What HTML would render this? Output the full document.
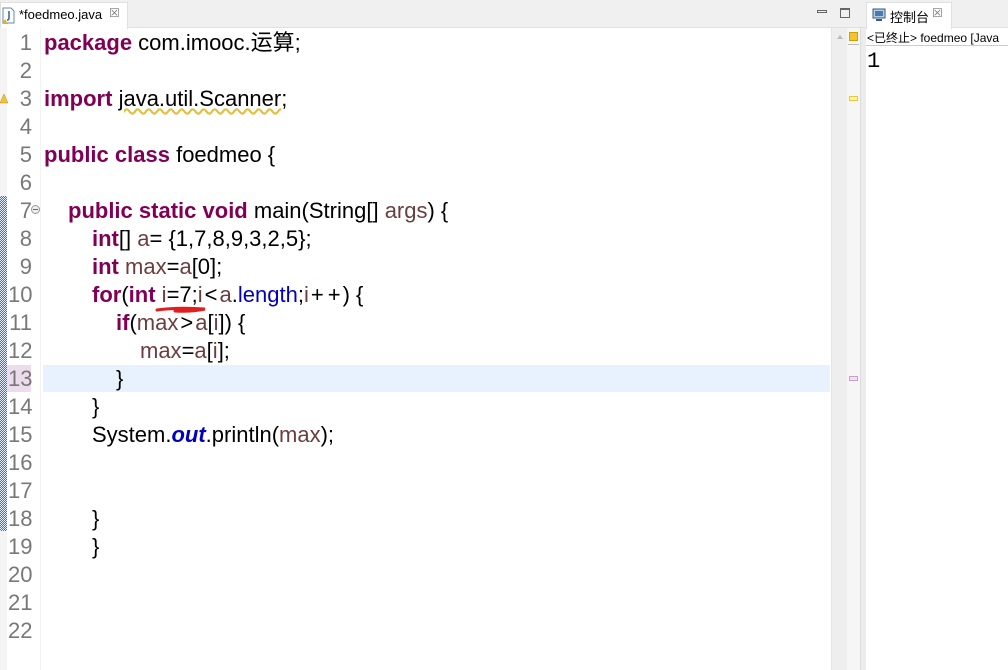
<!DOCTYPE html>
<html><head><meta charset="utf-8"><style>
*{margin:0;padding:0;box-sizing:border-box}
body{width:1008px;height:670px;background:#fff;position:relative;overflow:hidden;font-family:"Liberation Sans","Noto Sans CJK SC",sans-serif}
.abs{position:absolute}
.code{position:absolute;left:44px;font-size:22px;color:#000;white-space:pre;line-height:28px;height:28px}
.ln{position:absolute;left:8px;width:24px;text-align:right;font-size:22px;color:#787878;line-height:28px}
.k{color:#7f0055;font-weight:bold}
.v{color:#6a3e3e}
.f{color:#0000c0}
.t{margin:0 2px}
</style></head><body>
<div class="abs" style="left:0;top:0;width:866px;height:28px;background:#f0f0f0;border-bottom:1px solid #e0e0e0"></div>
<div class="abs" style="left:0;top:2px;width:128px;height:27px;background:#fff;border:1px solid #e0e0e0;border-bottom:none"></div>
<svg class="abs" style="left:2px;top:7px" width="14" height="18"><path d="M1 1h8l3 3v12H1z" fill="#fff" stroke="#6a8ab0"/><path d="M7 4v7q0 2-2 2" stroke="#3060a0" stroke-width="1.5" fill="none"/><path d="M0 17l3-5 3 5z" fill="#e8b020"/></svg>
<div class="abs" style="left:19px;top:7px;font-size:13px;color:#000">*foedmeo.java</div>
<div class="abs" style="left:109px;top:6px;font-size:12px;color:#777">☒</div>
<div class="abs" style="left:817px;top:10px;width:10px;height:3px;border:1px solid #666"></div>
<div class="abs" style="left:840px;top:8px;width:10px;height:10px;border:1px solid #666;border-top-width:2px"></div>
<div class="abs" style="left:0;top:28px;width:7px;height:642px;background:#f4f4f4"></div>
<div class="abs" style="left:0;top:196px;width:7px;height:335px;background:repeating-conic-gradient(#2f73e0 0 25%,#e4eefc 0 50%) 0 0/2px 2px"></div>
<div class="abs" style="left:40px;top:28px;width:1px;height:642px;background:#f2f2f2"></div>
<div class="abs" style="left:7px;top:365px;width:24px;height:27px;background:#ecdcec"></div>
<div class="abs" style="left:43px;top:365px;width:787px;height:27px;background:#e8f2fe"></div>
<div class="abs" style="left:831px;top:28px;width:16px;height:642px;background:#eeeeee;border-left:1px solid #e4e4e4"></div>
<div class="abs" style="left:847px;top:28px;width:13px;height:642px;background:#f6f6f6"></div>
<div class="abs" style="left:860px;top:28px;width:6px;height:642px;background:#ececec;border-left:1px solid #ddd"></div>
<div class="abs" style="left:837px;top:35px;border:3px solid transparent;border-bottom:4px solid #bbb;border-top:none"></div>
<div class="abs" style="left:849px;top:32px;width:9px;height:9px;background:#f4c430;border:1px solid #d0a000"></div>
<div class="abs" style="left:848px;top:44px;width:11px;height:1px;background:#bbb"></div>
<div class="abs" style="left:849px;top:96px;width:9px;height:5px;background:#fff3a0;border:1px solid #e8c840"></div>
<div class="abs" style="left:849px;top:376px;width:9px;height:5px;background:#f0e0f0;border:1px solid #c8a0d0"></div>
<div class="abs" style="left:866px;top:0;width:142px;height:28px;background:#f0f0f0;border-bottom:1px solid #e0e0e0"></div>
<div class="abs" style="left:866px;top:2px;width:86px;height:27px;background:#fff;border:1px solid #e0e0e0;border-bottom:none"></div>
<svg class="abs" style="left:872px;top:8px" width="14" height="14"><rect x="1" y="1" width="12" height="9" fill="#bcd" stroke="#335a8a"/><rect x="3" y="3" width="8" height="5" fill="#4a7ab0"/><rect x="4" y="11" width="6" height="2" fill="#335a8a"/></svg>
<div class="abs" style="left:890px;top:7px;font-size:13px;color:#000">控制台</div>
<div class="abs" style="left:932px;top:6px;font-size:12px;color:#777">☒</div>
<div class="abs" style="left:867px;top:29px;font-size:12px;color:#000;white-space:nowrap">&lt;已终止&gt; foedmeo [Java</div>
<div class="abs" style="left:866px;top:45px;width:142px;height:1px;background:#ccc"></div>
<div class="abs" style="left:867px;top:49px;font-size:22px;color:#000;font-family:'Liberation Mono',monospace">1</div>
<div class="abs" style="left:31px;top:205px;width:9px;height:9px;border:1px solid #999;border-radius:50%;background:#eee"></div>
<div class="abs" style="left:33px;top:209px;width:5px;height:1px;background:#666"></div>
<svg class="abs" style="left:0;top:92px" width="8" height="12"><path d="M0 11l4-9 4 9z" fill="#f0c040" stroke="#c09000" stroke-width=".5"/></svg>
<div class="ln" style="top:29px">1</div><div class="ln" style="top:57px">2</div><div class="ln" style="top:85px">3</div><div class="ln" style="top:113px">4</div><div class="ln" style="top:141px">5</div><div class="ln" style="top:169px">6</div><div class="ln" style="top:197px">7</div><div class="ln" style="top:225px">8</div><div class="ln" style="top:253px">9</div><div class="ln" style="top:281px">10</div><div class="ln" style="top:309px">11</div><div class="ln" style="top:337px">12</div><div class="ln" style="top:365px">13</div><div class="ln" style="top:393px">14</div><div class="ln" style="top:421px">15</div><div class="ln" style="top:449px">16</div><div class="ln" style="top:477px">17</div><div class="ln" style="top:505px">18</div><div class="ln" style="top:533px">19</div><div class="ln" style="top:561px">20</div><div class="ln" style="top:589px">21</div><div class="ln" style="top:617px">22</div>
<div class="code" style="top:29px"><span class="k">package</span> com.imooc.运算;</div>
<div class="code" style="top:85px"><span class="k">import</span> <span style="text-decoration:underline wavy #e0c040">java.util.Scanner</span>;</div>
<div class="code" style="top:141px"><span class="k">public</span> <span class="k">class</span> foedmeo {</div>
<div class="code" style="top:197px;left:68px"><span class="k">public</span> <span class="k">static</span> <span class="k">void</span> main(String[] <span class="v">args</span>) {</div>
<div class="code" style="top:225px;left:92px"><span class="k">int</span>[] <span class="v">a</span>= {1,7,8,9,3,2,5};</div>
<div class="code" style="top:253px;left:92px"><span class="k">int</span> <span class="v">max</span>=<span class="v">a</span>[0];</div>
<div class="code" style="top:281px;left:92px"><span class="k">for</span>(<span class="k">int</span> <span class="v">i</span>=7;<span class="v">i</span><span class="t">&lt;</span><span class="v">a</span>.<span class="f">length</span>;<span class="v">i</span><span class="t">+</span><span class="t">+</span>) {</div>
<svg class="abs" style="left:155px;top:305px" width="55" height="10"><path d="M2 5q20-3 48-1q-15 3-30 2" stroke="#e02020" stroke-width="3" fill="none" stroke-linecap="round"/></svg>
<div class="code" style="top:309px;left:116px"><span class="k">if</span>(<span class="v">max</span><span class="t">&gt;</span><span class="v">a</span>[<span class="v">i</span>]) {</div>
<div class="code" style="top:337px;left:140px"><span class="v">max</span>=<span class="v">a</span>[<span class="v">i</span>];</div>
<div class="code" style="top:365px;left:116px">}</div>
<div class="code" style="top:393px;left:92px">}</div>
<div class="code" style="top:421px;left:92px">System.<span class="f" style="font-weight:bold;font-style:italic">out</span>.println(<span class="v">max</span>);</div>
<div class="code" style="top:505px;left:92px">}</div>
<div class="code" style="top:533px;left:92px">}</div>
</body></html>
